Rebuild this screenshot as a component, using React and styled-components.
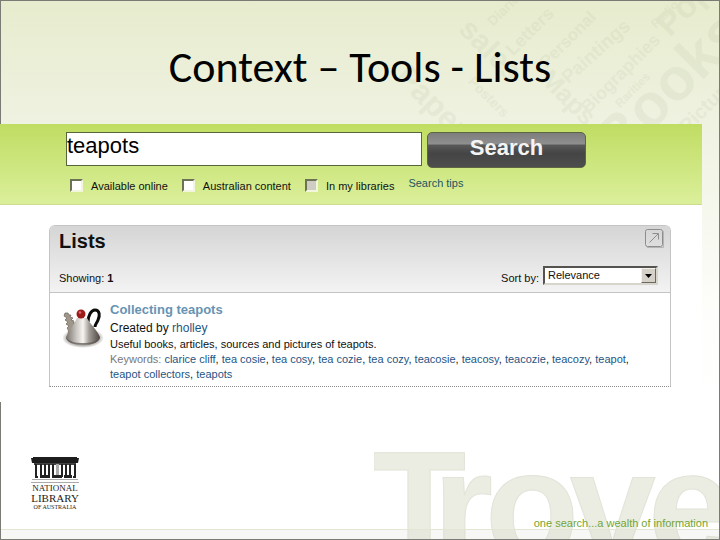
import styled, { createGlobalStyle } from 'styled-components';

const keywords = [
  'clarice cliff', 'tea cosie', 'tea cosy', 'tea cozie', 'tea cozy', 'teacosie',
  'teacosy', 'teacozie', 'teacozy', 'teapot', 'teapot collectors', 'teapots',
];

const cloudWords = [
  { text: 'Books', x: 239, y: 164, size: 60, angle: -45 },
  { text: 'Pop', x: 290, y: 37, size: 34, angle: -45 },
  { text: 'Diaries', x: 112, y: 26, size: 14, angle: -45 },
  { text: 'Letters', x: 132, y: 56, size: 18, angle: -45 },
  { text: 'Personal', x: 166, y: 68, size: 17, angle: -45 },
  { text: 'Paintings', x: 188, y: 84, size: 19, angle: -42 },
  { text: 'Biographies', x: 208, y: 114, size: 18, angle: -45 },
  { text: 'Rarities', x: 240, y: 108, size: 12, angle: -45 },
  { text: 'Radio', x: 276, y: 28, size: 12, angle: -45 },
  { text: 'Maps', x: 158, y: 80, size: 26, angle: 45 },
  { text: 'Papers', x: 12, y: 78, size: 32, angle: 45 },
  { text: 'Posters', x: 86, y: 82, size: 14, angle: 45 },
  { text: 'sales', x: 76, y: 30, size: 30, angle: 45 },
  { text: 'Pictures', x: 308, y: 134, size: 20, angle: -45 },
];

function App(){
  return(
    <Slide>
      <GlobalStyle />
      <TitleBar>
        <WordCloud />
        <Title>Context – Tools - Lists</Title>
      </TitleBar>
      <Capture>
        <SearchForm onSubmit={(e) => e.preventDefault()}>
          <SearchRow>
            <SearchInput type="text" aria-label="Search terms" defaultValue="teapots" />
            <SearchButton type="submit">Search</SearchButton>
          </SearchRow>
          <FilterRow>
            <Filter label="Available online" />
            <Filter label="Australian content" />
            <Filter label="In my libraries" disabled />
            <TipsLink href="#tips">Search tips</TipsLink>
          </FilterRow>
        </SearchForm>
        <Results>
          <Card>
            <CardHeader>
              <HeaderLine>
                <CardTitle>Lists</CardTitle>
                <ExpandButton type="button" aria-label="Open lists">
                  <svg width="19" height="19" viewBox="0 0 19 19" fill="none" stroke="#8d8d8d">
                    <rect x="0.5" y="0.5" width="17" height="17" rx="2" />
                    <path d="M18.5 2v16.5H2" stroke="#b5b5b5" />
                    <path d="M4.5 13.5L13 5M7.5 4.5h6v6" />
                  </svg>
                </ExpandButton>
              </HeaderLine>
              <HeaderLine>
                <Showing>Showing: <b>1</b></Showing>
                <Sort>
                  <label htmlFor="sort">Sort by:</label>
                  <SelectBox>
                    <SortSelect id="sort" defaultValue="Relevance">
                      <option>Relevance</option>
                      <option>Date</option>
                    </SortSelect>
                    <SelectArrow>
                      <svg width="7" height="4" viewBox="0 0 7 4"><path d="M0 0h7L3.5 4z" /></svg>
                    </SelectArrow>
                  </SelectBox>
                </Sort>
              </HeaderLine>
            </CardHeader>
            <Entry>
              <Teapot />
              <EntryText>
                <EntryTitle href="#list">Collecting teapots</EntryTitle>
                <Creator>Created by <a href="#rholley">rholley</a></Creator>
                <Line>Useful books, articles, sources and pictures of teapots.</Line>
                <Line>
                  <Muted>Keywords:</Muted>{' '}
                  {keywords.map((word, i) => (
                    <span key={word}>
                      {i > 0 && ', '}
                      <a href="#keyword">{word}</a>
                    </span>
                  ))}
                </Line>
              </EntryText>
            </Entry>
          </Card>
        </Results>
      </Capture>
      <Footer>
        <LibraryLogo />
        <Brand>
          <Wordmark viewBox="0 0 345 90" role="img" aria-label="Trove">
            <text x="-2 59 111 196 274" y="110">Trove</text>
          </Wordmark>
          <Tagline>one search...a wealth of information</Tagline>
        </Brand>
        <BaseStrip />
      </Footer>
    </Slide>
  );
};

export default App;

function Filter({label, disabled}){
  return(
    <FilterLabel>
      <CheckBox type="checkbox" disabled={disabled} />
      {label}
    </FilterLabel>
  );
};

function WordCloud(){
  return(
    <Cloud viewBox="0 0 340 124" aria-hidden="true">
      {cloudWords.map(({ text, x, y, size, angle }) => (
        <text key={text} fontSize={size} transform={`translate(${x} ${y}) rotate(${angle})`}>
          {text}
        </text>
      ))}
    </Cloud>
  );
};

function Teapot(){
  return(
    <svg width="42" height="42" viewBox="0 0 42 42" role="img" aria-label="Teapot">
      <defs>
        <linearGradient id="metal" x1="0" x2="1">
          <stop offset="0" stopColor="#77716b" />
          <stop offset="0.3" stopColor="#c9c5c0" />
          <stop offset="0.5" stopColor="#f7f5f2" />
          <stop offset="0.68" stopColor="#a39d97" />
          <stop offset="1" stopColor="#4d4642" />
        </linearGradient>
        <radialGradient id="shade">
          <stop offset="0.6" stopColor="#8a8681" />
          <stop offset="1" stopColor="#8a8681" stopOpacity="0" />
        </radialGradient>
      </defs>
      <ellipse cx="20" cy="31" rx="21" ry="10" fill="url(#shade)" />
      <path d="M2 6l3 0 1 2 2 0-1 2 3 1-2 2 3 1-1 2 4 0-1 8-8 3c1-3 0-5-1-6l2-2-3-2 2-2-3-2 2-2-3-2z" fill="#a0978b" stroke="#6b6259" strokeWidth="0.7" />
      <path d="M25 15c0-6 3-12 7-12 5 0 5 6 3 10-1 3-3 4-3 7" fill="none" stroke="#0c0b0b" strokeWidth="3" />
      <path d="M14 11h10c4 7 10 12 13 19 0 5-8 8-17 8S3 35 3 30c3-7 8-12 11-19z" fill="url(#metal)" />
      <path d="M3 30c3 5 10 6 17 6s14-1 17-6c0 5-8 8-17 8S3 35 3 30z" fill="#5a534f" opacity="0.7" />
      <circle cx="18" cy="7" r="4.5" fill="#9c1c1c" />
      <circle cx="17" cy="5.500" r="1.300" fill="#d6706a" />
    </svg>
  );
};

function LibraryLogo(){
  return(
    <Logo>
      <svg width="48" height="28" viewBox="0 0 48 28" aria-hidden="true">
        <path d="M2 1h44v1h2l-1 5H1L0 2h2z" fill="#1d1d1d" />
        <path d="M3 7h42v2H3z" fill="#444" />
        {[4, 9, 13, 17, 21, 30, 34, 38, 43].map((x) => (
          <path key={x} d={`M${x} 8h2v13h-2z`} fill="#222" />
        ))}
        <path d="M25 8h3v11h-3z" fill="#aaa" />
        <path d="M4 20h3v2H4zM9 19h10v3H9zM21 19h10v3H21zM33 19h8v3h-8zM42 20h3v2h-3z" fill="#222" />
        <path d="M1 23.500h46M0 26.500h48" stroke="#aaa" />
      </svg>
      <LogoLine $size={9}>NATIONAL</LogoLine>
      <LogoLine $size={11}>LIBRARY</LogoLine>
      <LogoLine $size={6}>OF AUSTRALIA</LogoLine>
    </Logo>
  );
};

const GlobalStyle = createGlobalStyle`
  * {
    box-sizing: border-box;
  }

  body {
    margin: 0;
    font-family: "Liberation Sans", Arial, sans-serif;
    font-size: 11px;
    color: #111;
  }

  a {
    color: #1f5583;
    text-decoration: none;
  }
`;

const Slide = styled.div`
  min-height: 100vh;
  display: flex;
  flex-direction: column;
  background: linear-gradient(#e7ecce, #eff2e1 124px, #fdfdfa 300px, #fff 400px);
  border: 1px solid #7b7b76;
`;

const TitleBar = styled.header`
  position: relative;
  height: 123px;
  display: flex;
  justify-content: center;
  padding-top: 42px;
`;

const Cloud = styled.svg`
  position: absolute;
  top: 0;
  right: 0;
  height: 100%;
  font-weight: 700;
  fill: #7d8560;
  opacity: 0.07;
`;

const Title = styled.h1`
  position: relative;
  margin: 0;
  font-family: Carlito, Lato, sans-serif;
  font-size: 44px;
  font-weight: 400;
  line-height: 48px;
  color: #000;
`;

const Capture = styled.main`
  margin: 0 17px 0 -1px;
  background: #fff;
`;

const SearchForm = styled.form`
  padding: 8px 116px 9px 66px;
  background: linear-gradient(#c0dd62, #dbef9b);
  border-bottom: 1px solid #cbdc90;
`;

const SearchRow = styled.div`
  display: flex;
  gap: 5px;
`;

const SearchInput = styled.input`
  flex: 1;
  min-width: 0;
  height: 34px;
  padding: 0 0 6px;
  border: 1px solid #55663a;
  border-radius: 0;
  background: #fff;
  font-family: inherit;
  font-size: 22px;
  color: #000;
`;

const SearchButton = styled.button`
  width: 159px;
  height: 36px;
  padding: 0 0 4px;
  border: 1px solid #5c6444;
  border-radius: 5px;
  background: linear-gradient(#7d7d7d, #8f8f8f 32%, #585858 36%, #454545 60%, #4d4d4d);
  font-family: inherit;
  font-size: 22px;
  font-weight: 700;
  color: #f4f4f4;
  cursor: pointer;
`;

const FilterRow = styled.div`
  display: flex;
  gap: 14px;
  padding: 9px 0 0 4px;
  white-space: nowrap;
`;

const FilterLabel = styled.label`
  display: flex;
  gap: 8px;
  line-height: 18px;
`;

const CheckBox = styled.input`
  appearance: none;
  width: 13px;
  height: 13px;
  margin: 2px 0 0;
  border: 2px solid;
  border-color: #6c7355 #f2f6dc #f2f6dc #6c7355;
  background: ${ ({ disabled }) => disabled ? '#cfccc4' : '#fff' };
`;

const TipsLink = styled.a`
  line-height: 13px;
  color: #1c5563;
`;

const Results = styled.section`
  padding: 20px 31px 15px 49px;
`;

const Card = styled.article`
  border: 1px solid #c4c4c4;
  border-bottom: 1px dotted #8a8a8a;
  border-radius: 6px 6px 0 0;
`;

const CardHeader = styled.div`
  padding: 3px 6px 1px 9px;
  border-bottom: 1px solid #c4c4c4;
  border-radius: 5px 5px 0 0;
  background: linear-gradient(#d5d5d5, #f3f3f3);
`;

const HeaderLine = styled.div`
  display: flex;
  justify-content: space-between;
`;

const CardTitle = styled.h2`
  margin: 0;
  font-size: 20px;
  line-height: 24px;
`;

const ExpandButton = styled.button`
  display: flex;
  height: 37px;
  padding: 0;
  border: 0;
  background: none;
  cursor: pointer;
`;

const Showing = styled.span`
  line-height: 25px;
`;

const Sort = styled.div`
  display: flex;
  gap: 4px;
  padding-right: 6px;
  line-height: 25px;
`;

const SelectBox = styled.div`
  display: grid;
  width: 115px;
  height: 19px;
  border: 2px solid;
  border-color: #55534f #d8d5cd #d8d5cd #55534f;
  background: #fff;
`;

const SortSelect = styled.select`
  appearance: none;
  grid-area: 1 / 1;
  padding: 0 3px;
  border: 0;
  background: none;
  font: inherit;
  line-height: 15px;
  color: #111;
`;

const SelectArrow = styled.span`
  grid-area: 1 / 1;
  justify-self: end;
  display: flex;
  align-items: center;
  justify-content: center;
  width: 15px;
  height: 15px;
  border: 1px solid;
  border-color: #f4f2ec #6b6862 #6b6862 #f4f2ec;
  background: #d5d1c8;
  pointer-events: none;
`;

const Entry = styled.div`
  display: flex;
  gap: 5px;
  padding: 8px 24px 4px 13px;

  > svg {
    flex: none;
    margin-top: 6px;
  }
`;

const EntryText = styled.div`
  flex: 1;
`;

const EntryTitle = styled.a`
  display: block;
  font-size: 13px;
  font-weight: 700;
  line-height: 18px;
  color: #6793b3;
`;

const Creator = styled.p`
  margin: 0;
  font-size: 12px;
  line-height: 18px;
`;

const Line = styled.p`
  margin: 0;
  line-height: 15px;
`;

const Muted = styled.span`
  color: #777;
`;

const Footer = styled.footer`
  flex: 1;
  position: relative;
  display: flex;
  justify-content: space-between;
  align-items: flex-end;
`;

const Logo = styled.div`
  display: flex;
  flex-direction: column;
  align-items: center;
  padding: 0 0 29px 30px;
`;

const LogoLine = styled.span`
  font-family: "Liberation Serif", serif;
  font-size: ${ ({ $size }) => $size }px;
  line-height: ${ ({ $size }) => $size }px;
  color: #222;
`;

const Brand = styled.div`
  position: relative;
  display: flex;
`;

const Wordmark = styled.svg`
  width: 345px;
  height: 90px;
  font-size: 154px;
  font-weight: 700;
  fill: #ebede3;
  stroke: #e1e4d8;
`;

const Tagline = styled.span`
  position: absolute;
  right: 11px;
  bottom: 9px;
  line-height: 14px;
  color: #74a532;
`;

const BaseStrip = styled.div`
  position: absolute;
  inset: auto 0 0;
  height: 10px;
  border-top: 1px solid #e3e6d2;
  background: rgba(200, 205, 190, 0.15);
`;
